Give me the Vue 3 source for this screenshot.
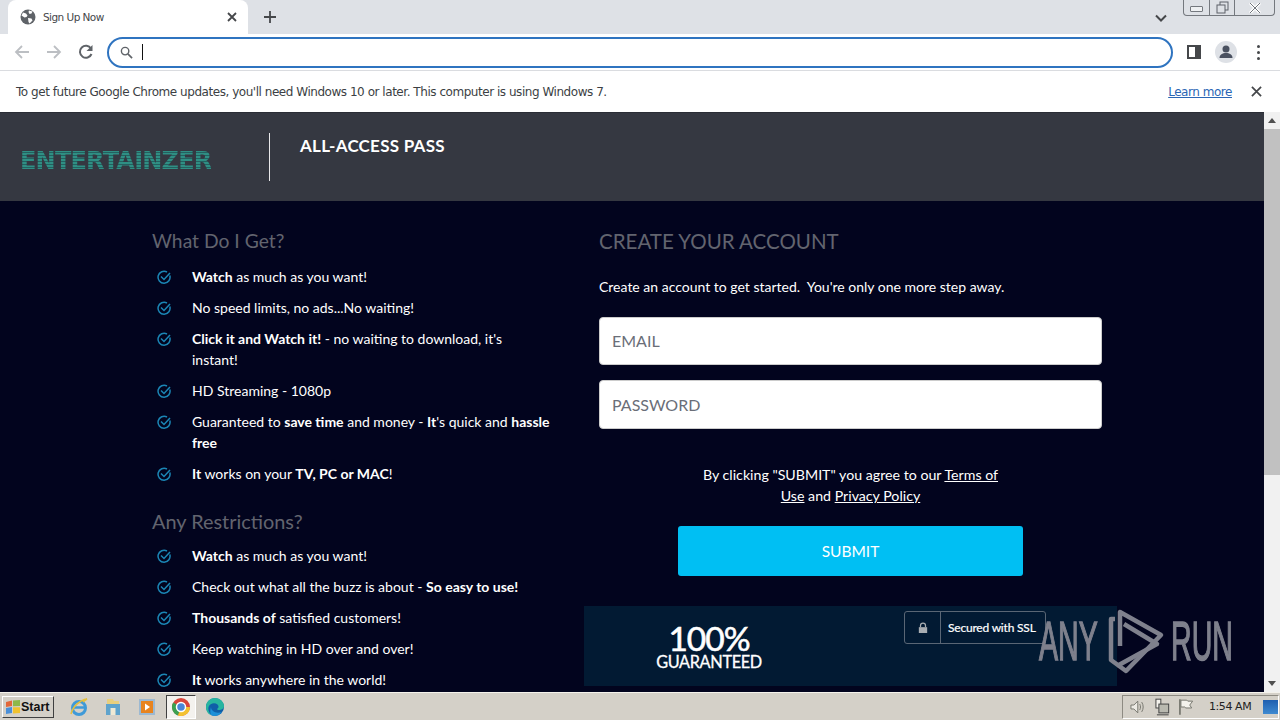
<template>
  <div class="screen">
    <!-- tab strip -->
    <div class="tabstrip">
      <div class="tab">
        <svg class="favicon" viewBox="0 0 16 16" width="16" height="16">
          <circle cx="8" cy="8" r="7.5" fill="#5f6368" />
          <path d="M3 3.500l3 1 1.500 2-1 1.500-2 .5-3-2zM9 1.500l3.500 1-1 2-2 .5-1-2zM8 9l3.500 .5 1 2-3 3-1-1.500z" fill="#fff" />
        </svg>
        <span class="tabtitle">Sign Up Now</span>
        <svg class="tabclose" viewBox="0 0 10 10" width="10" height="10">
          <path d="M1 1l8 8M9 1l-8 8" stroke="#45474a" stroke-width="1.800" />
        </svg>
      </div>
      <svg class="newtab" viewBox="0 0 12 12" width="12" height="12">
        <path d="M6 0v12M0 6h12" stroke="#45474a" stroke-width="1.800" />
      </svg>
      <svg class="tabsearch" viewBox="0 0 12 8" width="12" height="8">
        <path d="M1 1.500l5 5 5-5" fill="none" stroke="#45474a" stroke-width="2" />
      </svg>
      <div class="winctl">
        <div class="winbtn wb1"><span class="minbar"></span></div>
        <div class="winbtn wb2">
          <svg viewBox="0 0 13 13" width="13" height="13">
            <rect x="4" y="1" width="8" height="8" fill="none" stroke="#5c6168" />
            <rect x="1" y="4" width="8" height="8" fill="#dee1e6" stroke="#5c6168" />
          </svg>
        </div>
        <div class="winbtn wb3">
          <svg viewBox="0 0 12 10" width="12" height="10">
            <path d="M1 0l10 10M11 0l-10 10" stroke="#fff" stroke-width="3" />
            <path d="M1 0l10 10M11 0l-10 10" stroke="#70757c" stroke-width="1" />
          </svg>
        </div>
      </div>
    </div>

    <!-- toolbar -->
    <div class="toolbar">
      <svg class="navicon" viewBox="0 0 16 16" width="16" height="16">
        <path d="M15 8H2M8 2L2 8l6 6" fill="none" stroke="#bcbfc3" stroke-width="1.800" />
      </svg>
      <svg class="navicon" viewBox="0 0 16 16" width="16" height="16">
        <path d="M1 8h13M8 2l6 6-6 6" fill="none" stroke="#bcbfc3" stroke-width="1.800" />
      </svg>
      <svg class="navicon" viewBox="0 0 16 16" width="16" height="16">
        <path d="M13.500 10A6 6 0 1 1 13 4.500" fill="none" stroke="#5f6368" stroke-width="2" />
        <path d="M14.500 1v6h-6z" fill="#5f6368" />
      </svg>
      <div class="omnibox">
        <svg viewBox="0 0 14 14" width="13" height="13">
          <circle cx="5.500" cy="5.500" r="4" fill="none" stroke="#5f6368" stroke-width="1.500" />
          <path d="M8.500 8.500l4.500 4.500" stroke="#5f6368" stroke-width="1.800" />
        </svg>
        <span class="caret"></span>
      </div>
      <svg class="sidepanel" viewBox="0 0 14 14" width="14" height="14">
        <rect x="1" y="1" width="12" height="12" fill="#fff" stroke="#45474a" stroke-width="2" />
        <rect x="8" y="1" width="5" height="12" fill="#45474a" />
      </svg>
      <div class="avatar">
        <svg viewBox="0 0 22 22" width="22" height="22">
          <circle cx="11" cy="8" r="3.500" fill="#4a5160" />
          <path d="M4.500 17c0-3.500 3-5 6.500-5s6.500 1.500 6.500 5z" fill="#4a5160" />
        </svg>
      </div>
      <div class="dots"><i></i><i></i><i></i></div>
    </div>

    <!-- infobar -->
    <div class="infobar">
      <span>To get future Google Chrome updates, you'll need Windows 10 or later. This computer is using Windows 7.</span>
      <a class="learn">Learn more</a>
      <svg viewBox="0 0 12 12" width="11" height="11">
        <path d="M1 1l10 10M11 1L1 11" stroke="#45474a" stroke-width="1.900" />
      </svg>
    </div>

    <!-- page -->
    <div class="viewport">
      <div class="page">
        <header class="sitehead">
          <div class="logo">ENTERTAINZER</div>
          <div class="sep"></div>
          <div class="pass">ALL-ACCESS PASS</div>
        </header>

        <main class="content">
          <section class="left">
            <h2>What Do I Get?</h2>
            <ul>
              <li v-for="(row, i) in benefits" :key="i">
                <svg class="check" viewBox="0 0 14 14" width="14" height="14">
                  <path d="M12.800 5.500A6 6 0 1 1 10 2" fill="none" stroke="#1b86b5" stroke-width="1.500" />
                  <path d="M4 6.500l3 3 6-6.500" fill="none" stroke="#1b86b5" stroke-width="1.500" />
                </svg>
                <p><template v-for="(part, j) in row" :key="j"><b v-if="part.b">{{ part.b }}</b><template v-else>{{ part.t }}</template></template></p>
              </li>
            </ul>
            <h2 class="second">Any Restrictions?</h2>
            <ul class="second-list">
              <li v-for="(row, i) in limits" :key="i">
                <svg class="check" viewBox="0 0 14 14" width="14" height="14">
                  <path d="M12.800 5.500A6 6 0 1 1 10 2" fill="none" stroke="#1b86b5" stroke-width="1.500" />
                  <path d="M4 6.500l3 3 6-6.500" fill="none" stroke="#1b86b5" stroke-width="1.500" />
                </svg>
                <p><template v-for="(part, j) in row" :key="j"><b v-if="part.b">{{ part.b }}</b><template v-else>{{ part.t }}</template></template></p>
              </li>
            </ul>
          </section>

          <section class="right">
            <h2 class="upper">CREATE YOUR ACCOUNT</h2>
            <p class="lead">Create an account to get started.&nbsp; You're only one more step away.</p>
            <input class="field" type="text" placeholder="EMAIL" />
            <input class="field pw" type="text" placeholder="PASSWORD" />
            <p class="terms">By clicking "SUBMIT" you agree to our <a>Terms of Use</a> and <a>Privacy Policy</a></p>
            <button class="submit">SUBMIT</button>
            <div class="guarantee">
              <div class="hundred">
                <strong>100%</strong>
                <span>GUARANTEED</span>
              </div>
              <div class="ssl">
                <div class="lock">
                  <svg viewBox="0 0 12 14" width="10" height="12">
                    <path d="M3 6V4a3 3 0 0 1 6 0v2" fill="none" stroke="#a9adb2" stroke-width="1.500" />
                    <rect x="1" y="6" width="10" height="7" fill="#a9adb2" />
                  </svg>
                </div>
                <span>Secured with SSL</span>
              </div>
            </div>
          </section>
        </main>
      </div>

      <div class="scrollbar">
        <div class="arrow up"></div>
        <div class="thumb"></div>
        <div class="arrow down"></div>
      </div>

      <!-- watermark -->
      <div class="watermark">
        <span class="wmtext">ANY</span>
        <svg class="wmlogo" viewBox="0 0 58 66" width="58" height="66">
          <path d="M8 11H4V52L19 63L54 27L13 4V38" fill="none" stroke="#7f818d" stroke-width="4.500" stroke-linejoin="round" />
          <path d="M17 16L50 36L10 58" fill="none" stroke="#7f818d" stroke-width="4.500" stroke-linejoin="round" />
        </svg>
        <span class="wmtext run">RUN</span>
      </div>
    </div>

    <!-- taskbar -->
    <footer class="taskbar">
      <button class="start">
        <svg viewBox="0 0 16 16" width="16" height="16">
          <path d="M1 3l6-1.500V7L1 8z" fill="#e2673a" />
          <path d="M8 1.500L15 1v6l-7 .3z" fill="#8db849" />
          <path d="M1 9l6-1v6l-6 1z" fill="#4a8fd8" />
          <path d="M8 8.300h7V14l-7 .5z" fill="#f0c22e" />
        </svg>
        Start
      </button>
      <div class="apps">
        <svg viewBox="0 0 20 20" width="20" height="20">
          <circle cx="10" cy="11" r="6.500" fill="none" stroke="#3f9ad8" stroke-width="3" />
          <path d="M4 10.500h12" stroke="#3f9ad8" stroke-width="2.500" />
          <path d="M2 17C4 9 11 3 18 2c-2 1-3 2-4 3" fill="none" stroke="#e5bf3d" stroke-width="1.500" />
        </svg>
        <svg viewBox="0 0 20 20" width="20" height="20">
          <path d="M4 2h6l1 2h5v6H4z" fill="#e9cf7d" />
          <rect x="3" y="7" width="14" height="11" fill="#5fa3cc" />
          <rect x="7.500" y="11" width="5" height="7" fill="#efe9d4" />
        </svg>
        <svg viewBox="0 0 20 20" width="20" height="20">
          <rect x="2" y="2" width="16" height="16" fill="#9cb9d2" />
          <rect x="4" y="4" width="12" height="12" fill="#e8841f" />
          <path d="M8 6.500l5 3.500-5 3.500z" fill="#fff" />
        </svg>
        <div class="activeapp">
          <svg viewBox="0 0 20 20" width="20" height="20">
            <circle cx="10" cy="10" r="9" fill="#d9463b" />
            <path d="M10 10L2.200 5.500A9 9 0 0 0 7 18.500z" fill="#3ca050" />
            <path d="M10 10l-3 8.500A9 9 0 0 0 19 10z" fill="#f3c230" />
            <circle cx="10" cy="10" r="4.500" fill="#4a86d8" stroke="#fff" stroke-width="1.500" />
          </svg>
        </div>
        <svg viewBox="0 0 20 20" width="20" height="20">
          <circle cx="10" cy="10" r="9" fill="#0f5fa8" />
          <path d="M1 10C1 4 6 1 10 1c5 0 9 4 9 8 0 3-3 4-5 4-1 0-2-.5-2-1 2-1 2-3 .5-4.500C10 5.500 5 6 3.500 10 3 12 3.500 15 6 18 3 17 1 14 1 10z" fill="#27b5a0" />
          <path d="M6 18c3 2 8 1 11-3-3 1-7 1-9-1-1-1-2-2-2-4-1 3-1 6 0 8z" fill="#1c8fd8" />
        </svg>
      </div>
      <div class="tray">
        <svg viewBox="0 0 18 18" width="18" height="18">
          <path d="M3 7h3l4-4v12l-4-4H3z" fill="#eceae4" stroke="#77776f" />
          <path d="M12 6c1 2 1 4 0 6M14 4c2 3 2 7 0 10" fill="none" stroke="#77776f" />
        </svg>
        <svg viewBox="0 0 18 18" width="18" height="18">
          <rect x="3" y="1" width="5" height="9" fill="#f4f2ec" stroke="#444" />
          <rect x="6" y="6" width="10" height="9" fill="#b9b9b0" stroke="#444" />
          <path d="M4 17h12" stroke="#444" />
        </svg>
        <svg viewBox="0 0 18 18" width="18" height="18">
          <path d="M3 1v16" stroke="#66665f" stroke-width="1.500" />
          <path d="M4 2h6l1 1h5l-3 4 2 3H9L8 9H4z" fill="#f4f2ec" stroke="#77776f" />
        </svg>
        <span class="clock">1:54 AM</span>
        <div class="showdesk"></div>
      </div>
    </footer>
  </div>
</template>

<script setup>
const benefits = [
  [{ b: "Watch" }, { t: " as much as you want!" }],
  [{ t: "No speed limits, no ads...No waiting!" }],
  [{ b: "Click it and Watch it!" }, { t: " - no waiting to download, it's instant!" }],
  [{ t: "HD Streaming - 1080p" }],
  [{ t: "Guaranteed to " }, { b: "save time" }, { t: " and money - " }, { b: "It" }, { t: "'s quick and " }, { b: "hassle free" }],
  [{ b: "It" }, { t: " works on your " }, { b: "TV, PC or MAC" }, { t: "!" }],
];

const limits = [
  [{ b: "Watch" }, { t: " as much as you want!" }],
  [{ t: "Check out what all the buzz is about - " }, { b: "So easy to use!" }],
  [{ b: "Thousands of" }, { t: " satisfied customers!" }],
  [{ t: "Keep watching in HD over and over!" }],
  [{ b: "It" }, { t: " works anywhere in the world!" }],
];
</script>

<style>
html,
body {
  margin: 0;
  overflow: hidden;
}
</style>

<style scoped>
.screen {
  width: 1280px;
  height: 720px;
  display: flex;
  flex-direction: column;
  overflow: hidden;
  font-family: Lato, "Open Sans", sans-serif;
}

.tabstrip {
  height: 34px;
  background: #dee1e6;
  display: flex;
  align-items: center;
  padding-left: 8px;
  flex: none;
}
.tab {
  width: 240px;
  height: 34px;
  box-sizing: border-box;
  background: #fff;
  border-radius: 8px 8px 0 0;
  display: flex;
  align-items: center;
  padding: 0 11px 0 12px;
  color: #45474a;
}
.tabtitle {
  font: 10.5px "DejaVu Sans", sans-serif;
  letter-spacing: -0.55px;
  margin-left: 7px;
  flex: 1;
}
.newtab {
  margin-left: 16px;
}
.tabsearch {
  margin-left: 879px;
  margin-top: 1px;
}
.winctl {
  margin-left: 16px;
  align-self: flex-start;
  width: 92px;
  height: 16px;
  box-sizing: border-box;
  border: 1px solid #74787e;
  border-top: none;
  border-radius: 0 0 4px 4px;
  display: flex;
}
.winbtn {
  display: flex;
  align-items: center;
  justify-content: center;
  border-right: 1px solid #74787e;
}
.wb1 {
  width: 25px;
}
.wb2 {
  width: 24px;
}
.wb3 {
  flex: 1;
  border-right: none;
}
.minbar {
  width: 11px;
  height: 4px;
  border: 1px solid #74787e;
  border-radius: 1px;
  background: #eef0f2;
  margin-top: 3px;
}

.toolbar {
  height: 37px;
  box-sizing: border-box;
  flex: none;
  background: #fff;
  border-bottom: 1px solid #dadce0;
  display: flex;
  align-items: center;
  padding: 0 13px 0 14px;
}
.navicon {
  margin-right: 16px;
}
.omnibox {
  margin-left: -3px;
  width: 1066px;
  height: 31px;
  box-sizing: border-box;
  border: 2px solid #2f74c0;
  border-radius: 16px;
  display: flex;
  align-items: center;
  padding-left: 11px;
}
.caret {
  width: 1px;
  height: 16px;
  background: #111;
  margin-left: 9px;
}
.sidepanel {
  margin-left: 14px;
}
.avatar {
  margin-left: 14px;
  width: 22px;
  height: 22px;
  border-radius: 50%;
  background: #dee1e6;
}
.dots {
  margin-left: 20px;
  width: 3px;
  display: flex;
  flex-direction: column;
  gap: 3px;
}
.dots i {
  width: 3px;
  height: 3px;
  border-radius: 50%;
  background: #45474a;
}

.infobar {
  height: 41px;
  flex: none;
  box-sizing: border-box;
  background: #fff;
  display: flex;
  align-items: center;
  padding: 0 18px 0 16px;
  font: 12px "DejaVu Sans", sans-serif;
  letter-spacing: -0.46px;
  color: #3c3f44;
}
.learn {
  margin-left: auto;
  margin-right: 19px;
  color: #2a66b5;
  text-decoration: underline;
}

.viewport {
  position: relative;
  flex: 1;
  display: flex;
  overflow: hidden;
  min-height: 0;
}
.page {
  flex: 1;
  min-width: 0;
  background: #02041e;
  overflow: hidden;
  color: #fff;
}
.sitehead {
  height: 89px;
  box-sizing: border-box;
  background: #353841;
  border-top: 1px solid #2a2d35;
  display: flex;
  align-items: flex-start;
  padding: 20px 0 0 20px;
}
.logo {
  width: 191px;
  margin-top: 17px;
  font: bold 24px/22px "DejaVu Sans", sans-serif;
  letter-spacing: -0.8px;
  white-space: nowrap;
  color: transparent;
  background: repeating-linear-gradient(180deg, #2f8f84 0 2px, #24605f 2px 3px);
  -webkit-background-clip: text;
  background-clip: text;
}
.sep {
  width: 1px;
  height: 48px;
  margin-left: 58px;
  background: #e8e8ea;
}
.pass {
  margin-left: 30px;
  font-size: 17px;
  line-height: 26px;
  font-weight: 700;
  letter-spacing: 0.25px;
}

.content {
  display: flex;
  padding-left: 152px;
}
.left {
  width: 398.5px;
  padding-top: 26px;
}
h2 {
  margin: 0;
  font-size: 19.3px;
  line-height: 28px;
  font-weight: 400;
  color: #62646f;
}
h2.second {
  margin-top: 23px;
  font-size: 19.9px;
}
ul {
  list-style: none;
  margin: 11px 0 0;
  padding: 0;
}
ul.second-list {
  margin-top: 10px;
}
li {
  display: flex;
  margin-bottom: 10px;
  font-size: 14px;
  line-height: 21px;
}
.check {
  flex: none;
  margin: 4px 0 0 5px;
}
li p {
  margin: 0 0 0 21px;
}
b {
  font-weight: 700;
}

.right {
  margin-left: 48.5px;
  width: 503px;
  padding-top: 26px;
  display: flex;
  flex-direction: column;
  align-items: center;
}
.upper {
  align-self: stretch;
  font-size: 20.5px;
}
.lead {
  align-self: stretch;
  margin: 21px 0 20px;
  font-size: 14px;
  line-height: 21px;
}
.field {
  width: 100%;
  height: 48px;
  box-sizing: border-box;
  border: 1px solid #ccc;
  border-radius: 4px;
  padding: 0 12px 2px;
  font-family: inherit;
  font-size: 16px;
  background: #fff;
}
.field::placeholder {
  color: #6a6e78;
  opacity: 1;
}
.field.pw {
  margin-top: 15px;
  height: 49px;
  padding-bottom: 0;
}
.terms {
  width: 310px;
  margin: 35px 0 20px;
  text-align: center;
  font-size: 14.2px;
  line-height: 21px;
}
.terms a {
  text-decoration: underline;
}
.submit {
  width: 345px;
  height: 50px;
  border: none;
  border-radius: 3px;
  background: #00bff3;
  color: #fff;
  font-family: inherit;
  font-size: 15.5px;
}
.guarantee {
  margin-top: 30px;
  align-self: flex-start;
  margin-left: -15px;
  width: 533px;
  height: 80px;
  background: #021a33;
  display: flex;
  align-items: flex-start;
  flex: none;
}
.hundred {
  margin: 17px 0 0 69px;
  width: 112px;
  display: flex;
  flex-direction: column;
  align-items: center;
}
.hundred strong {
  font-size: 33.5px;
  line-height: 30px;
  font-weight: 400;
  letter-spacing: -1px;
  -webkit-text-stroke: 0.6px #fff;
}
.hundred span {
  font-size: 16.3px;
  line-height: 17px;
  letter-spacing: -0.35px;
  -webkit-text-stroke: 0.3px #fff;
  white-space: nowrap;
}
.ssl {
  margin: 5px 0 0 139px;
  width: 142px;
  height: 33px;
  box-sizing: border-box;
  border: 1px solid #5a6675;
  border-radius: 3px;
  display: flex;
  align-items: center;
  font-size: 12px;
  letter-spacing: -0.2px;
  -webkit-text-stroke: 0.2px #fff;
}
.lock {
  width: 35px;
  height: 31px;
  border-right: 1px solid #5a6675;
  display: flex;
  align-items: center;
  justify-content: center;
  margin-right: 7px;
}

.scrollbar {
  width: 16px;
  flex: none;
  background: #f1f1f1;
  display: flex;
  flex-direction: column;
}
.arrow {
  height: 17px;
  flex: none;
  display: flex;
  align-items: center;
  justify-content: center;
}
.arrow::before {
  content: "";
  border-left: 4px solid transparent;
  border-right: 4px solid transparent;
}
.up::before {
  border-bottom: 5px solid #505050;
}
.down {
  margin-top: auto;
}
.down::before {
  border-top: 5px solid #505050;
}
.thumb {
  height: 346px;
  background: #c1c1c1;
}

.watermark {
  position: absolute;
  left: 1039px;
  top: 496px;
  display: flex;
  align-items: center;
}
.wmlogo {
  margin-left: 6px;
}
.wmtext {
  width: 62px;
  font: 400 55px/60px "Liberation Sans", sans-serif;
  color: #7f818d;
  white-space: nowrap;
  transform: scaleX(0.52);
  transform-origin: left center;
  -webkit-text-stroke: 1.5px #7f818d;
}
.run {
  margin-left: 6px;
}

.taskbar {
  height: 28px;
  flex: none;
  box-sizing: border-box;
  background: #d4d0c8;
  border-top: 1px solid #f4f2ec;
  display: flex;
  align-items: center;
  padding-left: 2px;
}
.start {
  width: 52px;
  height: 22px;
  padding: 0 0 0 2px;
  box-sizing: border-box;
  background: #d4d0c8;
  border: 1px solid;
  border-color: #fff #404040 #404040 #fff;
  display: flex;
  align-items: center;
  gap: 0;
  font: bold 12.5px "Liberation Sans", sans-serif;
  color: #111;
}
.apps {
  display: flex;
  align-items: center;
  gap: 14px;
  margin-left: 15px;
}
.activeapp {
  width: 30px;
  height: 24px;
  margin: 0 -5px 0 -5px;
  box-sizing: border-box;
  background: #f4f2ee;
  border: 1px solid;
  border-color: #404040 #fff #fff #404040;
  display: flex;
  align-items: center;
  justify-content: center;
}
.tray {
  margin-left: auto;
  margin-right: 1px;
  width: 157px;
  height: 24px;
  box-sizing: border-box;
  border: 1px solid;
  border-color: #8d8a82 #fff #fff #8d8a82;
  display: flex;
  align-items: center;
  padding-left: 5px;
  gap: 7px;
}
.clock {
  font: 11px "DejaVu Sans", sans-serif;
  letter-spacing: -0.4px;
  color: #222;
  margin-left: 7px;
  white-space: nowrap;
}
.showdesk {
  width: 15px;
  height: 14px;
  background: linear-gradient(180deg, #1f5fb0, #3f8ad0);
  margin-left: 5px;
}
</style>
